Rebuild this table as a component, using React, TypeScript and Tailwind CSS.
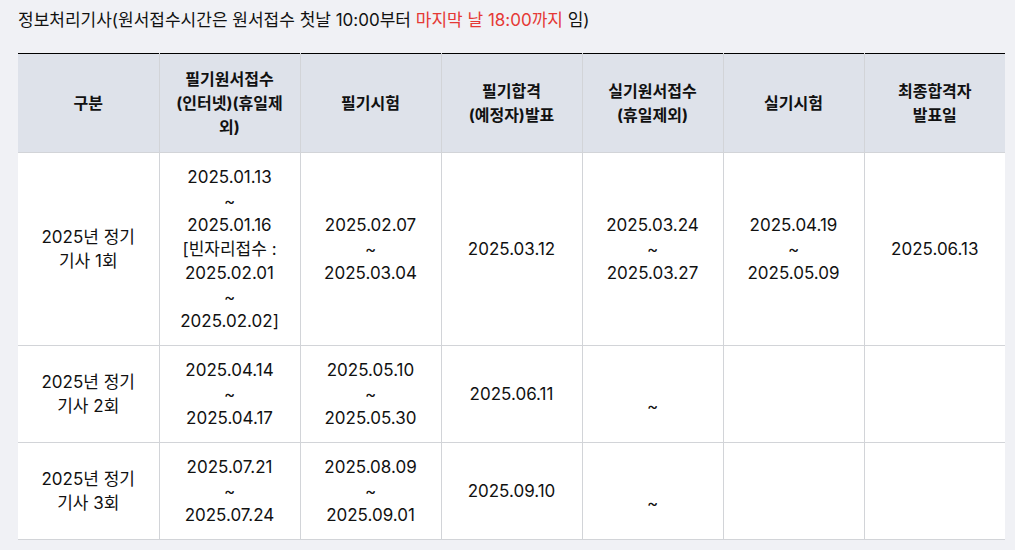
import React from "react";

const font = { fontFamily: 'Inter, "Noto Sans CJK KR", "Noto Sans", sans-serif' };

type Cell = React.ReactNode;

const rows: Cell[][] = [
  [
    <>2025년 정기<br />기사 1회</>,
    <>2025.01.13<br />~<br />2025.01.16<br />[빈자리접수 :<br />2025.02.01<br />~<br />2025.02.02]</>,
    <>2025.02.07<br />~<br />2025.03.04</>,
    <>2025.03.12</>,
    <>2025.03.24<br />~<br />2025.03.27</>,
    <>2025.04.19<br />~<br />2025.05.09</>,
    <>2025.06.13</>,
  ],
  [
    <>2025년 정기<br />기사 2회</>,
    <>2025.04.14<br />~<br />2025.04.17</>,
    <>2025.05.10<br />~<br />2025.05.30</>,
    <>2025.06.11</>,
    <><br />~</>,
    <></>,
    <></>,
  ],
  [
    <>2025년 정기<br />기사 3회</>,
    <>2025.07.21<br />~<br />2025.07.24</>,
    <>2025.08.09<br />~<br />2025.09.01</>,
    <>2025.09.10</>,
    <><br />~</>,
    <></>,
    <></>,
  ],
];

const headers: Cell[] = [
  <>구분</>,
  <>필기원서접수<br />(인터넷)(휴일제<br />외)</>,
  <>필기시험</>,
  <>필기합격<br />(예정자)발표</>,
  <>실기원서접수<br />(휴일제외)</>,
  <>실기시험</>,
  <>최종합격자<br />발표일</>,
];

export default function App() {
  return (
    <div className="w-[1015px] h-[550px] bg-[#f0f1f5] text-[#111111] overflow-hidden" style={font}>
      <div className="pl-[18px] pt-[8px] text-[17px] leading-[24px]">
        정보처리기사(원서접수시간은 원서접수 첫날 10:00부터{" "}
        <span className="text-[#e53935]">마지막 날 18:00까지</span> 임)
      </div>
      <table className="ml-[18px] mt-[21px] w-[987px] table-fixed border-collapse bg-white text-[17px] leading-[24px]">
        <colgroup>
          {headers.map((_, i) => (
            <col key={i} className="w-[141px]" />
          ))}
        </colgroup>
        <thead>
          <tr className="border-t border-t-black bg-[#dee2ea]">
            {headers.map((h, i) => (
              <th
                key={i}
                className={`h-[99px] px-[16px] py-[12px] text-center align-middle text-[16px] font-bold ${i > 0 ? "border-l border-l-[#d2d4d8]" : ""}`}
              >
                {h}
              </th>
            ))}
          </tr>
        </thead>
        <tbody>
          {rows.map((r, ri) => (
            <tr key={ri} className="border-t border-t-[#d2d4d8] border-b border-b-[#d2d4d8]">
              {r.map((c, ci) => (
                <td
                  key={ci}
                  className={`px-[14px] py-[12px] text-center align-middle ${ci > 0 ? "border-l border-l-[#d2d4d8]" : ""}`}
                >
                  {c}
                </td>
              ))}
            </tr>
          ))}
        </tbody>
      </table>
    </div>
  );
}
